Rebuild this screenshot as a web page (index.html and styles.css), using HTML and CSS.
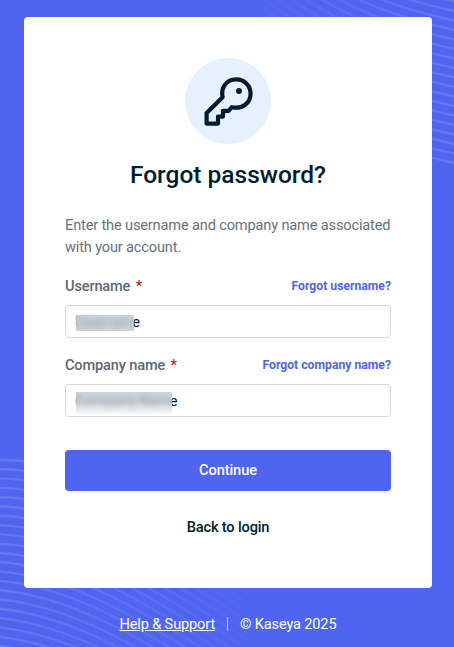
FILE: index.html
```html
<!DOCTYPE html>
<html lang="en">

<head>
    <meta charset="UTF-8">
    <meta name="viewport" content="width=device-width, initial-scale=1.0">
    <title>Forgot password</title>
    <link rel="stylesheet" href="styles.css">
</head>

<body>
    <svg class="waves" id="waves" viewBox="0 0 454 647" aria-hidden="true">
        <defs>
            <linearGradient id="fadeRight" gradientUnits="userSpaceOnUse" x1="0" y1="0" x2="290" y2="0">
                <stop offset="0" stop-color="#fff" stop-opacity=".13" />
                <stop offset="1" stop-color="#fff" stop-opacity="0" />
            </linearGradient>
            <linearGradient id="fadeLeft" gradientUnits="userSpaceOnUse" x1="230" y1="0" x2="454" y2="0">
                <stop offset="0" stop-color="#fff" stop-opacity="0" />
                <stop offset="1" stop-color="#fff" stop-opacity=".13" />
            </linearGradient>
        </defs>
        <g id="bottomWaves" stroke="url(#fadeRight)"></g>
        <g id="topWaves" stroke="url(#fadeLeft)"></g>
    </svg>
    <main class="card">
        <div class="icon-circle">
            <svg class="key-icon" viewBox="0 0 50 50">
                <path d="M3.6 47.6V37L19.6 21.3C17.5 11.5 23.5 3.4 33.2 3.4A14.2 14.2 0 0 1 47.6 17.5C47.6 27 39.5 33.4 28.8 31.2L25.6 34.8H20V40.6H15V47.6Z" />
                <circle cx="36" cy="15" r="2.9" />
            </svg>
        </div>
        <h1>Forgot password?</h1>
        <p class="intro">Enter the username and company name associated with your account.</p>
        <form>
            <div class="label-row">
                <label for="username">Username <span class="required">*</span></label>
                <a class="forgot" href="#">Forgot username?</a>
            </div>
            <div class="field" id="username">
                <span class="value">Username</span>
                <span class="mask mask-user"></span>
            </div>
            <div class="label-row">
                <label for="company">Company name <span class="required">*</span></label>
                <a class="forgot" href="#">Forgot company name?</a>
            </div>
            <div class="field" id="company">
                <span class="value">Company Name</span>
                <span class="mask mask-company"></span>
            </div>
            <button type="button">Continue</button>
        </form>
        <a class="back" href="#">Back to login</a>
    </main>
    <footer>
        <a href="#">Help &amp; Support</a>
        <span class="divider"></span>
        <span>© Kaseya 2025</span>
    </footer>
    <script>
        const bottomWaves = document.getElementById('bottomWaves');
        const topWaves = document.getElementById('topWaves');

        function addWave(group, d) {
            let path = document.createElementNS('http://www.w3.org/2000/svg', 'path');
            path.setAttribute('d', d);
            group.appendChild(path);
        }

        for (let i = 0; i < 21; i++) {
            let y = 460 + i * 9.3;
            addWave(bottomWaves, `M0 ${y}C60 ${y - 2 + i * 0.5} 130 ${y + 34} 300 ${y + 150}`);
        }

        for (let i = 0; i < 30; i++) {
            let y = 163 - i * 9.5;
            addWave(topWaves, `M454 ${y}C400 ${y - 12} 330 ${y - 30} 230 ${y - 115}`);
        }
    </script>
</body>

</html>
```
FILE: styles.css
```css
* {
    box-sizing: border-box;
}

body {
    font-family: Roboto, "Liberation Sans", sans-serif;
    font-size: 14.6px;
    letter-spacing: -0.16px;
    margin: 0;
    padding: 17px 22px 0 24px;
    height: 647px;
    background-color: #4f64ef;
    color: #001b2e;
    overflow: hidden;
}

.waves {
    position: absolute;
    top: 0;
    left: 0;
    width: 454px;
    height: 647px;
    z-index: -1;
    fill: none;
    stroke-width: 2.4;
}

.card {
    display: flex;
    flex-direction: column;
    height: 571px;
    padding: 41px 41px 0;
    background-color: white;
    border-radius: 4px;
}

.icon-circle {
    display: flex;
    align-items: center;
    justify-content: center;
    align-self: center;
    width: 86px;
    height: 86px;
    border-radius: 50%;
    background-color: #e6f0ff;
}

.key-icon {
    width: 50px;
    height: 50px;
    fill: none;
    stroke: #001b2e;
    stroke-width: 4.2;
    stroke-linejoin: round;
}

.key-icon circle {
    fill: #001b2e;
    stroke: none;
}

h1 {
    margin: 15px 0 0;
    font-size: 24.5px;
    line-height: 32px;
    font-weight: 500;
    letter-spacing: 0;
    text-align: center;
}

.intro {
    margin: 23px 0 18px;
    line-height: 22px;
    color: #66717d;
}

.label-row {
    display: flex;
    align-items: center;
    justify-content: space-between;
    height: 20px;
    margin-bottom: 9px;
}

label {
    color: #5b6875;
    font-weight: 500;
}

.required {
    margin-left: 2px;
    color: #b3261e;
}

.forgot {
    color: #4f64ef;
    font-size: 12.2px;
    font-weight: 700;
    letter-spacing: 0;
    text-decoration: none;
}

.field {
    position: relative;
    height: 33px;
    margin-bottom: 17px;
    padding: 0 9px;
    border: 1px solid #d9d9d9;
    border-radius: 4px;
    line-height: 32px;
}

/* blurred cover over the entered value */
.mask {
    position: absolute;
    left: 10px;
    top: 9px;
    width: 58px;
    height: 16px;
    background-color: rgba(190, 200, 208, 0.75);
    backdrop-filter: blur(3px);
}

.mask-company {
    top: 7px;
    width: 96px;
    height: 22px;
    background: linear-gradient(rgba(190, 198, 205, 0.75) 40%, rgba(244, 246, 247, 0.75));
}

button {
    display: block;
    width: 100%;
    height: 41px;
    margin-top: 33px;
    padding: 0 0 2px;
    border: 0;
    border-radius: 4px;
    background-color: #4f64ef;
    color: white;
    font: 500 14.6px Roboto, sans-serif;
    letter-spacing: -0.1px;
}

.back {
    margin-top: 26px;
    color: #001b2e;
    font-weight: 500;
    line-height: 20px;
    text-align: center;
    text-decoration: none;
}

footer {
    display: flex;
    align-items: center;
    justify-content: center;
    gap: 12px;
    height: 20px;
    margin-top: 26px;
    color: white;
}

footer a {
    color: white;
}

.divider {
    width: 1px;
    height: 14px;
    background-color: #c5ccfa;
}
```
